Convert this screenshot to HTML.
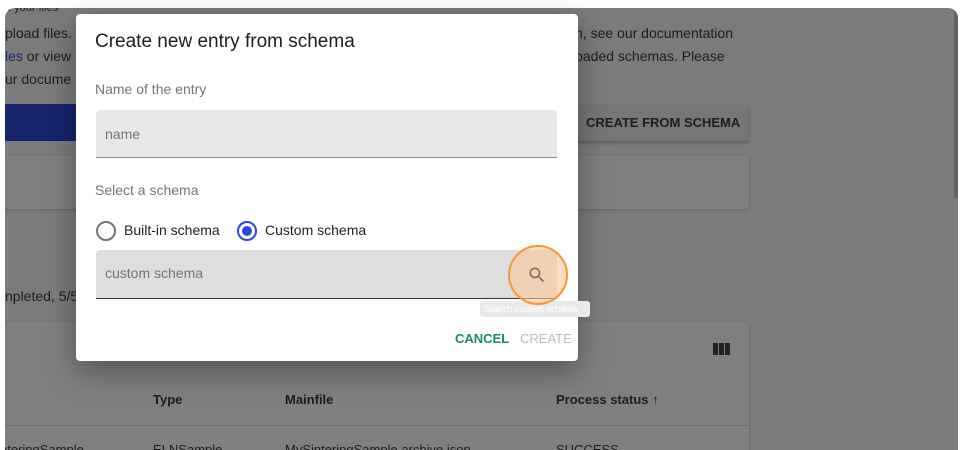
<!DOCTYPE html>
<html><head><style>
*{margin:0;padding:0;box-sizing:border-box}
html,body{width:972px;height:450px;overflow:hidden;background:#fff;font-family:"Liberation Sans",sans-serif;position:relative}
.bg{position:absolute;left:5px;top:8px;width:953px;height:442px;background:#f6f6f6;border-radius:10px 10px 0 0;overflow:hidden}
.ov{position:absolute;left:5px;top:8px;width:953px;height:442px;background:rgba(0,0,0,0.5);border-radius:10px 10px 0 0}
.abs{position:absolute;white-space:nowrap}
.t{color:#3a3a3a;font-size:14px}
.scroll{position:absolute;right:0;top:0;width:4px;height:190px;background:#c2c2c2}
.dlg{position:absolute;left:76px;top:14px;width:502px;height:347px;background:#fff;border-radius:4px;box-shadow:0 10px 30px rgba(0,0,0,.35)}
.lbl{color:#757575;font-size:14px}
</style></head><body>
<div class="bg">
 <div class="abs t" style="left:0;top:-6px;font-size:11px">d your files</div>
 <div class="abs t" style="left:0;top:17px">pload files.</div>
 <div class="abs t" style="left:0;top:40px"><span style="color:#3550f0">les</span> or view</div>
 <div class="abs t" style="left:0;top:63px">ur docume</div>
 <div class="abs t" style="left:570px;top:17px">n, see our documentation</div>
 <div class="abs t" style="left:567px;top:40px">loaded schemas. Please</div>
 <div class="abs" style="left:0;top:96px;width:71px;height:37px;background:#2c48dc"></div>
 <div class="abs" style="left:540px;top:96px;width:204px;height:37px;background:#ececec;border-radius:4px;box-shadow:0 2px 3px rgba(0,0,0,.25)"></div>
 <div class="abs" style="left:581px;top:107px;font-size:13px;font-weight:bold;color:#3c3c3c">CREATE FROM SCHEMA</div>
 <div class="abs" style="left:0;top:148px;width:744px;height:53px;background:#fff;border-radius:4px;box-shadow:0 1px 3px rgba(0,0,0,.2)"></div>
 <div class="abs t" style="left:0;top:280px">npleted, 5/5</div>
 <div class="abs" style="left:0;top:314px;width:744px;height:140px;background:#fff;border-radius:4px;box-shadow:0 1px 3px rgba(0,0,0,.2)"></div>
 <div class="abs" style="left:708px;top:335px;width:17px;height:12px;background:repeating-linear-gradient(90deg,#444 0 5px,transparent 5px 6px)"></div>
 <div class="abs t" style="left:148px;top:384px;font-weight:bold;font-size:13px">Type</div>
 <div class="abs t" style="left:280px;top:384px;font-weight:bold;font-size:13px">Mainfile</div>
 <div class="abs t" style="left:551px;top:384px;font-weight:bold;font-size:13px">Process status ↑</div>
 <div class="abs" style="left:0;top:417px;width:744px;height:1px;background:#ddd"></div>
 <div class="abs t" style="left:-5px;top:434px;font-size:13px">nteringSample</div>
 <div class="abs t" style="left:148px;top:434px;font-size:13px">ELNSample</div>
 <div class="abs t" style="left:280px;top:434px;font-size:13px">MySinteringSample.archive.json</div>
 <div class="abs t" style="left:551px;top:434px;font-size:13px">SUCCESS</div>
 <div class="scroll"></div>
</div>
<div class="ov"></div>
<div class="dlg">
 <div class="abs" style="left:19px;top:17px;font-size:19px;color:#1d1d1d">Create new entry from schema</div>
 <div class="abs lbl" style="left:19px;top:67px">Name of the entry</div>
 <div class="abs" style="left:20px;top:96px;width:461px;height:48px;background:#e8e8e8;border-radius:4px 4px 0 0;border-bottom:1px solid #8a8a8a"></div>
 <div class="abs lbl" style="left:29px;top:112px">name</div>
 <div class="abs lbl" style="left:19px;top:168px">Select a schema</div>
 <div class="abs" style="left:20px;top:207px;width:20px;height:20px;border:2px solid #757575;border-radius:50%"></div>
 <div class="abs" style="left:48px;top:208px;font-size:14px;color:#222">Built-in schema</div>
 <div class="abs" style="left:161px;top:207px;width:20px;height:20px;border:2px solid #2a48d8;border-radius:50%"></div>
 <div class="abs" style="left:166px;top:212px;width:10px;height:10px;background:#2a48d8;border-radius:50%"></div>
 <div class="abs" style="left:189px;top:208px;font-size:14px;color:#222">Custom schema</div>
 <div class="abs" style="left:20px;top:236px;width:461px;height:49px;background:#dedede;border-radius:4px 4px 0 0;border-bottom:1px solid #333"></div>
 <div class="abs lbl" style="left:29px;top:251px">custom schema</div>
 <div class="abs" style="left:404px;top:287px;width:110px;height:16px;background:#eaeaea;border-radius:3px;color:#fff;font-size:9px;padding:3px 4px">Search custom schema</div>
 <div class="abs" style="left:432px;top:231px;width:60px;height:60px;border:2px solid #f7963a;border-radius:50%;background:rgba(253,200,150,.6)"></div>
 <svg class="abs" style="left:451px;top:251px" width="20" height="20" viewBox="0 0 24 24"><path fill="#8a6a55" d="M15.5 14h-.79l-.28-.27A6.47 6.47 0 0016 9.5 6.5 6.5 0 109.5 16c1.61 0 3.09-.59 4.23-1.57l.27.28v.79l5 4.99L20.49 19l-4.99-5zm-6 0C7.01 14 5 11.99 5 9.5S7.01 5 9.5 5 14 7.01 14 9.5 11.99 14 9.5 14z"/></svg>
 <div class="abs" style="left:379px;top:317px;font-size:13px;font-weight:bold;color:#1e8a6a">CANCEL</div>
 <div class="abs" style="left:444px;top:317px;font-size:13px;color:#bdbdbd">CREATE</div>
</div>
</body></html>
